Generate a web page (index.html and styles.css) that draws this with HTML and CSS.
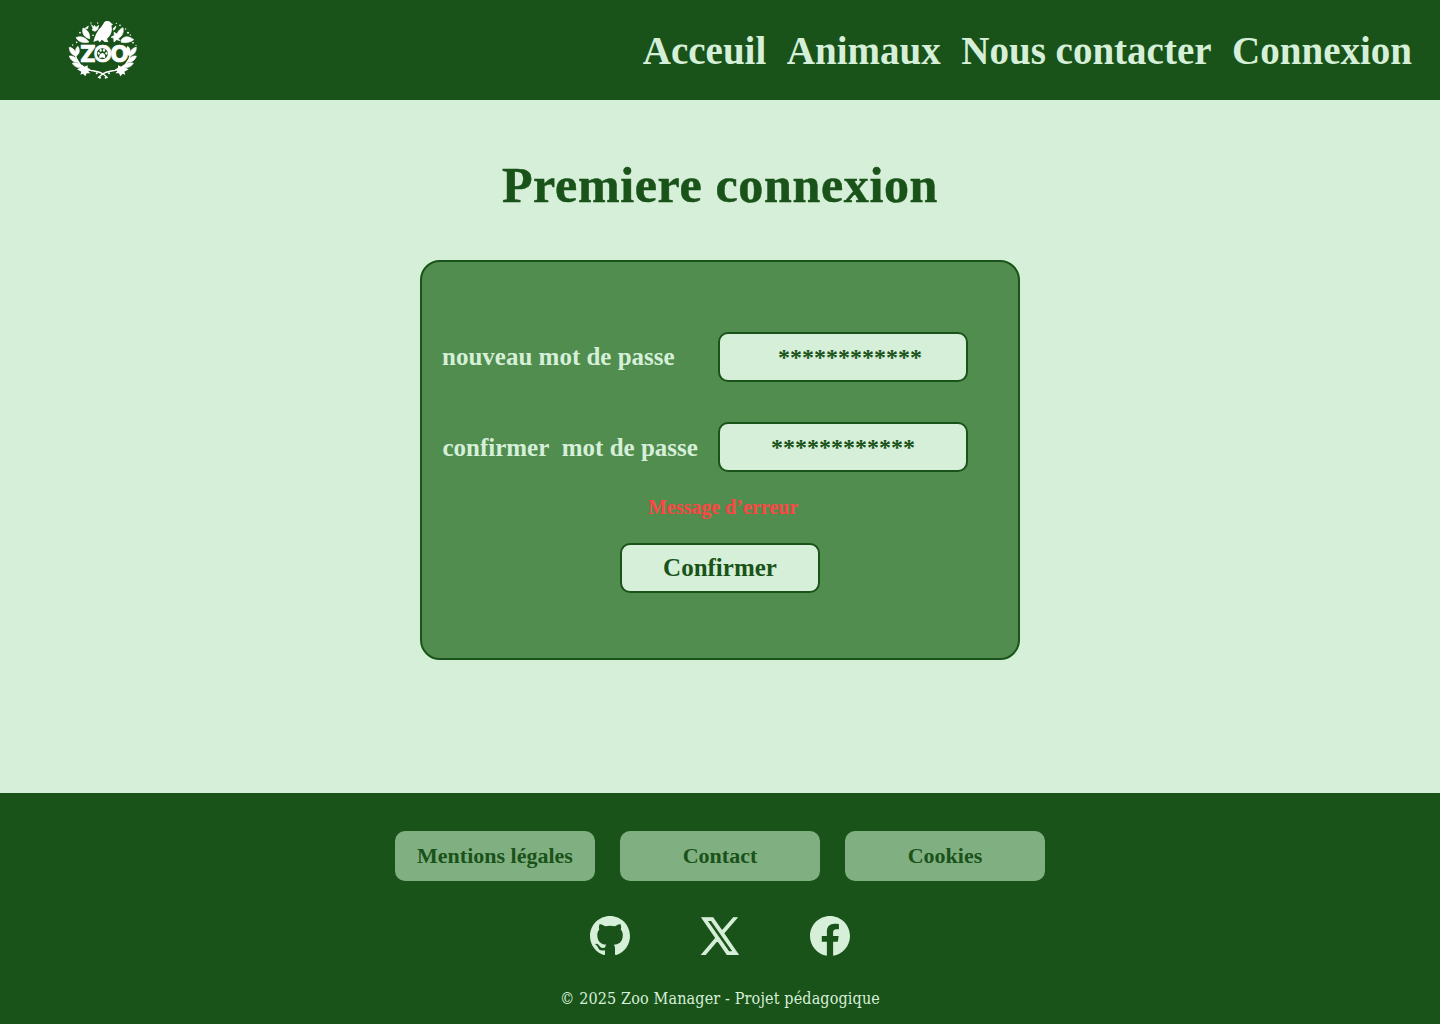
FILE: index.html
```html
<!DOCTYPE html>
<html lang="fr">
<head>
<meta charset="utf-8">
<title>Zoo Manager - Premiere connexion</title>
<link rel="stylesheet" href="styles.css">
</head>
<body>
<header class="header">
  <a class="brand" href="#" aria-label="Zoo">
    <svg class="logo" viewBox="0 0 270 240" fill="#fff">
      <!-- bird -->
      <path d="M100 96C104 78 111 62 124 50C131 44 129 38 137 34C144 31 151 34 153 39L159 43L154 47C158 60 154 72 146 81L141 87L145 96H134L126 89L119 97L114 91Z"/>
      <!-- top foliage -->
      <g stroke="#fff" stroke-width="2" stroke-linejoin="round">
        <path d="M94 44L101 51L103 46L108 52L116 46L113 58L105 64L96 60L99 55Z"/>
        <path d="M69 54C84 60 90 71 89 86C73 83 65 71 69 54Z"/>
        <path d="M48 83C61 76 76 82 87 96C69 101 55 95 48 83Z"/>
        <path d="M189 53C192 65 188 78 174 86L181 92L170 89L162 96L161 84L153 82L163 76L162 67L171 72C175 62 181 56 189 53Z"/>
        <path d="M184 89C196 75 209 80 221 89C210 98 195 99 184 97Z"/>
        <path d="M160 55L168 48L165 57L160 61ZM75 55L85 48L83 56Z"/>
      </g>
      <g>
        <circle cx="93" cy="39" r="2"/><circle cx="113" cy="39" r="2"/><circle cx="169" cy="40" r="2"/><circle cx="180" cy="46" r="2.5"/><circle cx="204" cy="68" r="3"/><circle cx="211" cy="75" r="2"/><circle cx="60" cy="68" r="2.5"/><circle cx="50" cy="97" r="2.5"/><circle cx="219" cy="98" r="2.5"/><circle cx="99" cy="76" r="2.5"/><circle cx="197" cy="57" r="2"/><circle cx="38" cy="105" r="2"/><circle cx="228" cy="106" r="2"/>
      </g>
      <!-- side branches, mirrored -->
      <g id="branch">
        <path d="M28 112C41 114 48 124 47 138C34 134 28 125 28 112ZM54 109C61 122 58 133 49 137C44 126 46 115 54 109ZM28 138C42 137 51 145 56 157C43 158 31 151 28 138ZM37 160C48 156 60 161 68 171C55 175 43 171 37 160Z" stroke="#fff" stroke-width="2"/>
        <path d="M51 178L63 172L66 164L73 170L83 166L83 174L92 178L85 184L91 190L80 190L76 199L69 191L61 194L64 185Z"/>
        <path d="M45 132C50 158 67 174 91 181C109 184 119 184 132 194L143 203" fill="none" stroke="#fff" stroke-width="4"/>
        <circle cx="110" cy="190" r="3"/><circle cx="120" cy="203" r="3"/>
      </g>
      <use href="#branch" transform="translate(257 0) scale(-1 1)"/>
      <text class="logo-word" x="60" y="156" textLength="146">ZOO</text>
      <!-- paw -->
      <circle cx="127" cy="131" r="16.5" fill="#1a5319"/>
      <path d="M127 129C133 129 138 138 135 143C132 146 130 142 127 143C124 142 121 146 118 143C116 138 121 129 127 129Z"/>
      <ellipse cx="122" cy="121" rx="3.2" ry="4.5"/><ellipse cx="132" cy="121" rx="3.2" ry="4.5"/><ellipse cx="116" cy="130" rx="3" ry="4"/><ellipse cx="139" cy="130" rx="3" ry="4"/>
    </svg>
  </a>
  <nav class="nav">
    <a href="#">Acceuil</a>
    <a href="#">Animaux</a>
    <a href="#">Nous contacter</a>
    <a href="#">Connexion</a>
  </nav>
</header>

<main class="main">
  <h1 class="title">Premiere connexion</h1>
  <form class="card">
    <div class="field">
      <label class="label" for="pwd">nouveau mot de passe</label>
      <div class="input input-new" id="pwd">************</div>
    </div>
    <div class="field">
      <label class="label label-confirm" for="confirm">confirmer&nbsp; mot de passe</label>
      <div class="input" id="confirm">************</div>
    </div>
    <p class="error">Message d’erreur</p>
    <button class="submit" type="button">Confirmer</button>
  </form>
</main>

<footer class="footer">
  <div class="links">
    <a href="#">Mentions légales</a>
    <a href="#">Contact</a>
    <a href="#">Cookies</a>
  </div>
  <div class="social">
    <svg viewBox="0 0 16 16"><path d="M8 0C3.58 0 0 3.58 0 8c0 3.54 2.29 6.53 5.47 7.59.4.07.55-.17.55-.38 0-.19-.01-.82-.01-1.49-2.01.37-2.53-.49-2.69-.94-.09-.23-.48-.94-.82-1.13-.28-.15-.68-.52-.01-.53.63-.01 1.08.58 1.23.82.72 1.21 1.87.87 2.33.66.07-.52.28-.87.51-1.07-1.78-.2-3.64-.89-3.64-3.95 0-.87.31-1.59.82-2.15-.08-.2-.36-1.02.08-2.12 0 0 .67-.21 2.2.82.64-.18 1.32-.27 2-.27s1.36.09 2 .27c1.53-1.04 2.2-.82 2.2-.82.44 1.1.16 1.92.08 2.12.51.56.82 1.27.82 2.15 0 3.07-1.87 3.75-3.65 3.95.29.25.54.73.54 1.48 0 1.07-.01 1.93-.01 2.2 0 .21.15.46.55.38A8.01 8.01 0 0 0 16 8c0-4.42-3.58-8-8-8z"/></svg>
    <svg class="x" viewBox="-75 -62 1350 1350"><path d="M714.163 519.284L1160.89 0H1055.03L667.137 450.887L357.328 0H0L468.492 681.821L0 1226.37H105.866L515.491 750.218L842.672 1226.37H1200L714.137 519.284ZM569.165 687.828L521.697 619.934L144.011 79.694H306.615L611.412 515.685L658.88 583.579L1055.08 1150.3H892.476L569.165 687.854Z"/></svg>
    <svg viewBox="0 0.073 24 24"><path d="M24 12.073c0-6.627-5.373-12-12-12s-12 5.373-12 12c0 5.99 4.388 10.954 10.125 11.854v-8.385H7.078v-3.47h3.047V9.43c0-3.007 1.792-4.669 4.533-4.669 1.312 0 2.686.235 2.686.235v2.953H15.83c-1.491 0-1.956.925-1.956 1.874v2.25h3.328l-.532 3.47h-2.796v8.385C19.612 23.027 24 18.062 24 12.073z"/></svg>
  </div>
  <p class="copyright">© 2025 Zoo Manager - Projet pédagogique</p>
</footer>
</body>
</html>
```
FILE: styles.css
```css
* {
  box-sizing: border-box;
}

body {
  margin: 0;
  min-height: 1024px;
  display: flex;
  flex-direction: column;
  background: #d6efd8;
  color: #1a5319;
  font-family: "Liberation Serif", "Times New Roman", serif;
  font-weight: 700;
}

a {
  color: inherit;
  text-decoration: none;
}

.header {
  height: 100px;
  padding: 0 28px 0 60px;
  display: flex;
  align-items: center;
  justify-content: space-between;
  background: #1a5319;
}

.logo {
  display: block;
  width: 90px;
  height: 80px;
}

.logo-word {
  font: 800 70px Inter, sans-serif;
  stroke: #fff;
  stroke-width: 2px;
}

.nav {
  display: flex;
  gap: 20.6px;
  padding-top: 1px;
  color: #d6efd8;
  font-size: 39px;
  line-height: 44px;
}

.main {
  flex: 1;
  display: flex;
  flex-direction: column;
  align-items: center;
}

.title {
  margin: 55px 0 45px;
  font-size: 50px;
  line-height: 60px;
  letter-spacing: 0.65px;
  -webkit-text-stroke: 0.5px #1a5319;
}

.card {
  width: 600px;
  height: 400px;
  padding: 70px 50px 0 20px;
  display: flex;
  flex-direction: column;
  background: #508d4e;
  border: 2px solid #1a5319;
  border-radius: 20px;
}

.field {
  display: flex;
  align-items: center;
  justify-content: space-between;
  margin-bottom: 40px;
}

.label {
  color: #d6efd8;
  font-size: 25px;
  line-height: 28px;
}

.label-confirm {
  padding: 2px 0 0 0.4px;
}

.input {
  width: 250px;
  height: 50px;
  background: #d6efd8;
  border: 2px solid #1a5319;
  border-radius: 10px;
  font-size: 24px;
  line-height: 46px;
  text-align: center;
}

.input-new {
  padding-left: 14px;
}

.error {
  margin: -17px 0 24px 36px;
  color: #ff4545;
  font-size: 20px;
  line-height: 24px;
  text-align: center;
}

.submit {
  width: 200px;
  height: 50px;
  margin-left: 178px;
  padding: 0;
  background: #d6efd8;
  border: 2px solid #1a5319;
  border-radius: 10px;
  color: inherit;
  font: 700 25px "Liberation Serif", serif;
}

.footer {
  height: 231px;
  padding-top: 38px;
  display: flex;
  flex-direction: column;
  align-items: center;
  background: #1a5319;
}

.links {
  display: flex;
  gap: 25px;
}

.links a {
  width: 200px;
  height: 50px;
  border-radius: 10px;
  background: #80af81;
  font-size: 22px;
  line-height: 50px;
  text-align: center;
}

.social {
  display: flex;
  gap: 70px;
  margin-top: 35px;
}

.social svg {
  width: 40px;
  height: 40px;
  fill: #d6efd8;
}

.social .x {
  stroke: #d6efd8;
  stroke-width: 48px;
}

.copyright {
  margin: 33px 0 0;
  color: #d6efd8;
  font: 400 16px/20px "DejaVu Serif Condensed", "DejaVu Serif", serif;
  font-stretch: condensed;
  letter-spacing: 0.14px;
}
```
